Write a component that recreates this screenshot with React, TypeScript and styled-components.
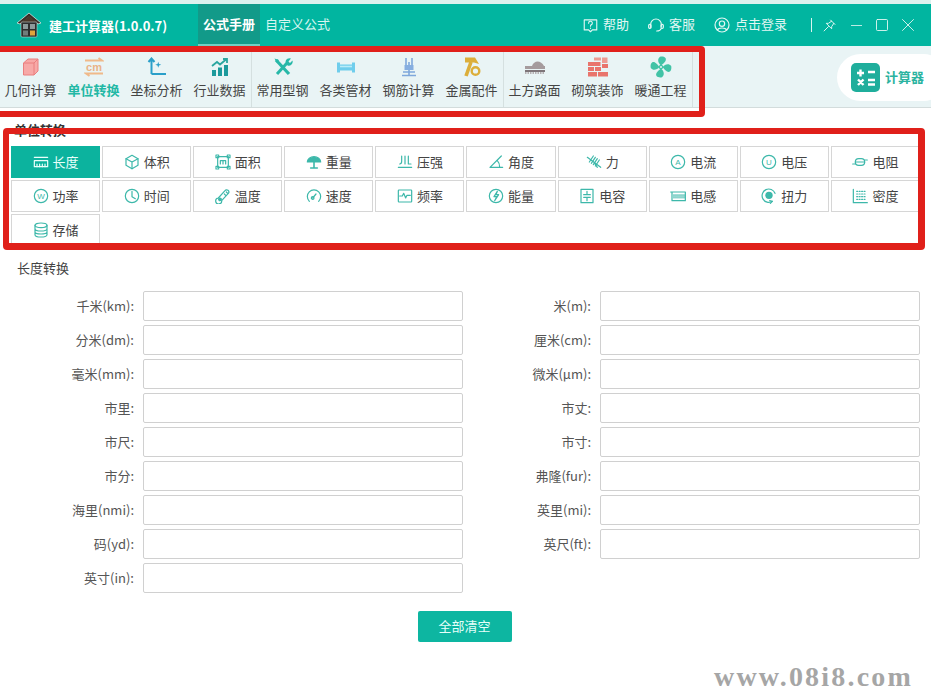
import React from "react";
import styled, { createGlobalStyle } from "styled-components";

const GlobalStyle = createGlobalStyle`
  html, body {
    margin: 0;
    padding: 0;
    background: #fff;
    overflow: hidden;
  }
  body {
    font-family: "Noto Sans CJK SC", "Noto Sans", sans-serif;
    font-size: 13px;
    color: #444;
  }
  * { box-sizing: border-box; }
`;

const Page = styled.div`
  width: 931px;
  height: 696px;
  position: relative;
  overflow: hidden;
  background: #fff;
`;

const Header = styled.header`
  height: 46px;
  border-top: 4px solid #dcf1ee;
  background: #01b5a0;
  display: flex;
  align-items: stretch;
  color: #fff;
`;
const Brand = styled.div`
  width: 198px;
  padding-left: 16px;
  display: flex;
  align-items: center;
  gap: 7px;
  font-weight: 700;
  font-size: 13px;
  white-space: nowrap;
`;
const NavTab = styled.div<{ $active?: boolean }>`
  width: ${p => (p.$active ? "62px" : "70px")};
  padding-left: ${p => (p.$active ? "0" : "5px")};
  padding-bottom: 1px;
  display: flex;
  align-items: center;
  justify-content: ${p => (p.$active ? "center" : "flex-start")};
  white-space: nowrap;
  font-weight: ${p => (p.$active ? 700 : 400)};
  background: ${p => (p.$active ? "#129a89" : "transparent")};
  border-bottom: 2px solid ${p => (p.$active ? "#6fd0c3" : "transparent")};
  color: ${p => (p.$active ? "#fff" : "#d8f5f0")};
`;
const HeaderRight = styled.div`
  margin-left: auto;
  padding-right: 17px;
  display: flex;
  align-items: center;
  color: #e2f7f3;
`;
const HeaderLink = styled.div<{ $gap: number }>`
  display: flex;
  align-items: center;
  gap: 5px;
  margin-right: ${p => p.$gap}px;
  white-space: nowrap;
`;
const LinkText = styled.span`
  margin-bottom: 4px;
`;
const HeaderDivider = styled.div`
  width: 1px;
  height: 14px;
  background: #d8f5f0;
  margin-right: 11px;
`;
const WindowButton = styled.div<{ $gap: number }>`
  display: flex;
  margin-right: ${p => p.$gap}px;
`;

const Toolbar = styled.nav`
  height: 62px;
  position: relative;
  background: #e9f4f5;
  border-bottom: 1px solid #d3dcdc;
  display: flex;
`;
const ToolGroup = styled.div`
  height: 61px;
  display: flex;
  margin-left: -1px;
  border-right: 1px solid #d5e0e0;
`;
const ToolItem = styled.div<{ $active?: boolean }>`
  width: 63px;
  display: flex;
  flex-direction: column;
  align-items: center;
  padding-top: 11px;
  gap: 3px;
  white-space: nowrap;
  font-size: 13px;
  line-height: 20px;
  font-weight: ${p => (p.$active ? 700 : 400)};
  color: ${p => (p.$active ? "#22b8a5" : "#444")};
`;
const ToolIconSlot = styled.span`
  height: 20px;
  display: flex;
  align-items: center;
`;
const CalcPill = styled.div`
  position: absolute;
  left: 837px;
  top: 8px;
  width: 110px;
  height: 47px;
  background: #fff;
  border-radius: 24px;
  display: flex;
  align-items: center;
  padding-left: 14px;
  gap: 5px;
  font-weight: 700;
  color: #2bb3a0;
  white-space: nowrap;
`;
const CalcLabel = styled.span`
  margin-bottom: 2px;
`;

const Mark = styled.div`
  position: absolute;
  border: 6px solid #e0201a;
  border-radius: 4px;
  pointer-events: none;
`;
const ToolbarMark = styled(Mark)`
  left: -10px;
  top: 0;
  width: 715px;
  height: 71px;
`;
const TabsMark = styled(Mark)`
  left: 3px;
  top: 20px;
  width: 922px;
  height: 122px;
  border-width: 6px 7px 7px 6px;
`;

const TabSection = styled.section`
  position: relative;
  padding: 13px 0 0 11px;
  height: 144px;
`;
const SectionTitle = styled.div`
  font-weight: 700;
  line-height: 18px;
  padding-left: 3px;
  color: #333;
`;
const TabGrid = styled.div`
  margin-top: 7px;
  width: 909px;
  display: grid;
  grid-template-columns: repeat(10, 1fr);
  grid-auto-rows: 32px;
  gap: 2px;
`;
const UnitTab = styled.div<{ $active?: boolean }>`
  display: flex;
  align-items: center;
  justify-content: center;
  gap: 4px;
  padding-bottom: 1px;
  white-space: nowrap;
  border: 1px solid ${p => (p.$active ? "#0cb39e" : "#d6d6d6")};
  background: ${p => (p.$active ? "#0cb39e" : "#fff")};
  color: ${p => (p.$active ? "#eafffb" : "#444")};
`;
const TabIconWrap = styled.span<{ $active?: boolean }>`
  display: flex;
  color: ${p => (p.$active ? "#eafffb" : "#3db8aa")};
`;

const FormTitle = styled.div`
  margin: 0 0 14px 17px;
  padding-top: 7px;
  line-height: 18px;
  color: #444;
`;
const FormGrid = styled.div`
  display: grid;
  grid-template-columns: 455px 455px;
  column-gap: 2px;
  row-gap: 4px;
  padding-left: 8px;
`;
const Field = styled.label`
  display: flex;
  align-items: center;
`;
const FieldLabel = styled.span`
  width: 126px;
  margin-right: 9px;
  margin-bottom: 2px;
  text-align: right;
  color: #555;
  white-space: nowrap;
`;
const FieldInput = styled.input`
  width: 320px;
  height: 30px;
  border: 1px solid #d0d0d0;
  border-radius: 2px;
  background: #fff;
  outline: none;
`;
const ClearRow = styled.div`
  display: flex;
  justify-content: center;
  margin-top: 18px;
  padding-right: 2px;
`;
const ClearButton = styled.button`
  width: 94px;
  height: 31px;
  padding: 0 0 2px;
  border: none;
  border-radius: 2px;
  background: #0db6a1;
  color: #e6fffa;
  font: inherit;
`;
const Watermark = styled.div`
  position: absolute;
  left: 714px;
  top: 661px;
  font-family: "Liberation Serif", serif;
  font-weight: 700;
  font-size: 28px;
  line-height: 32px;
  letter-spacing: 2.2px;
  color: #a6a6a6;
  white-space: nowrap;
`;

const Svg = styled.svg<{ $size: number }>`
  width: ${p => p.$size}px;
  height: ${p => p.$size}px;
  flex: none;
  display: block;
`;

const Line = ({ size, children }: { size: number; children: React.ReactNode }) => (
  <Svg $size={size} viewBox="0 0 24 24" fill="none" stroke="currentColor" strokeWidth={1.8} strokeLinecap="round" strokeLinejoin="round">
    {children}
  </Svg>
);

const Logo = () => (
  <Svg $size={26} viewBox="0 0 26 26">
    <path d="M13 1 L25 11 L22 12 L13 5 L4 12 L1 11 Z" fill="#3a2f28" stroke="#e8f3ee" strokeWidth="0.7" />
    <path d="M13 4 L22 11 H4 Z" fill="#4a372a" />
    <rect x="5" y="10" width="16" height="15" rx="1" fill="#2d2d2d" stroke="#dfeee9" strokeWidth="0.5" />
    <rect x="7" y="12" width="5" height="5" fill="#8d9a9a" />
    <rect x="14" y="12" width="5" height="5" fill="#8d9a9a" />
    <rect x="7" y="18.5" width="5" height="5" fill="#6f7c7c" />
    <rect x="14" y="18.5" width="5" height="5" fill="#e0a43c" />
  </Svg>
);

const fanBlade = "M11 9.5 C8 7 7 3 10 0.8 C14 0 17 2 15.5 5 C14.5 7 12.5 8 11 9.5 Z";

const toolIcons: Record<string, React.ReactNode> = {
  cube: (
    <Svg $size={20} viewBox="0 0 20 20">
      <path d="M2.5 6 L7 2 H17 V14 L13 18 H2.5 Z" fill="#f7a9a7" stroke="#ea7f7f" strokeWidth="1" />
      <path d="M2.5 6 H13 V18 M13 6 L17 2" fill="none" stroke="#ea7f7f" strokeWidth="1" />
    </Svg>
  ),
  cm: (
    <Svg $size={20} viewBox="0 0 20 20">
      <path d="M1 3.5 H18 L14.5 1 M19 16.5 H2 L5.5 19" fill="none" stroke="#f0b98a" strokeWidth="1.8" />
      <text x="10" y="13.5" textAnchor="middle" fontSize="11" fontWeight="700" fontFamily="Liberation Sans" fill="#e9b387">cm</text>
    </Svg>
  ),
  axes: (
    <Svg $size={20} viewBox="0 0 20 20">
      <path d="M4.5 17 V2 M1.5 5 L4.5 1.5 L7.5 5 M4.5 17 H19" fill="none" stroke="#2a9fc9" strokeWidth="2" />
      <path d="M13 5 L14 8 L17 9 L14 10 L13 13 L12 10 L9 9 L12 8 Z" fill="#2a9fc9" transform="translate(1.5 1) scale(.75)" />
    </Svg>
  ),
  chart: (
    <Svg $size={20} viewBox="0 0 20 20">
      <path d="M2 9 L7 5 L10 7.5 L16 2.5 M13 2 H17 V6" fill="none" stroke="#2aa6a0" strokeWidth="1.8" />
      <path d="M2 13 H6 V19 H2 Z M8 10.5 H12 V19 H8 Z M14 8 H18 V19 H14 Z" fill="#1d9a9c" />
    </Svg>
  ),
  tools: (
    <Svg $size={20} viewBox="0 0 20 20">
      <path d="M3 3 L16 17" stroke="#27b8a8" strokeWidth="3.2" fill="none" />
      <path d="M1.5 1.5 L6 3 L4 6 Z" fill="#27b8a8" />
      <path d="M4 17 L14 6" stroke="#27b8a8" strokeWidth="3" fill="none" />
      <path d="M12.5 5 A4 4 0 0 1 18 1.5 L15.5 4.5 L17 6 L19.5 3.5 A4 4 0 0 1 14.5 8.5 Z" fill="#27b8a8" />
    </Svg>
  ),
  pipe: (
    <Svg $size={20} viewBox="0 0 20 20">
      <path d="M1 5.5 H4 V7.5 H16 V5.5 H19 V15.5 H16 V13.5 H4 V15.5 H1 Z" fill="#6fcdec" />
      <path d="M4 9.5 H16" stroke="#b9ecf8" strokeWidth="1.6" />
    </Svg>
  ),
  rebar: (
    <Svg $size={20} viewBox="0 0 20 20">
      <path d="M7 1 V8 M13 1 V8 M10 5 V19" stroke="#7fa8dc" strokeWidth="1.6" fill="none" />
      <path d="M5.5 8 H14.5 V13 H5.5 Z" fill="#86aee0" />
      <path d="M3 18.5 H17 M4 15 H16" stroke="#7fa8dc" strokeWidth="1.6" fill="none" />
    </Svg>
  ),
  hammer: (
    <Svg $size={20} viewBox="0 0 20 20">
      <path d="M9 5 L4 19" stroke="#dcae3a" strokeWidth="3.6" fill="none" />
      <path d="M3 0.5 H13 L17 7 L12 5.5 H3 Z" fill="#dcae3a" />
      <circle cx="13.5" cy="14" r="3.8" fill="none" stroke="#dcae3a" strokeWidth="2.4" />
    </Svg>
  ),
  road: (
    <Svg $size={22} viewBox="0 0 22 20">
      <path d="M8 9 C10 3 17 3 20 9 H21 V12 H1 V9 Z" fill="#a59b9d" />
      <path d="M1 13 H21 V15 H1 Z" fill="#7e7579" />
      <path d="M1 16 H21" stroke="#a59b9d" strokeWidth="1.4" strokeDasharray="1.5 1" />
    </Svg>
  ),
  brick: (
    <Svg $size={22} viewBox="0 0 22 22">
      <path d="M7 1.5 H14 V4.5 H7 Z M15 1.5 H20.5 V7 H15 Z" fill="#ee9a92" />
      <path d="M1 6 H13.5 V10 H1 Z M15 8 H21 V12 H15 Z M1 11 H7 V15 H1 Z M8 11 H14 V15 H8 Z M1 16 H10 V20.5 H1 Z M11 16 H21 V20.5 H11 Z" fill="#e9746c" />
    </Svg>
  ),
  fan: (
    <Svg $size={22} viewBox="0 0 22 22">
      {[0, 90, 180, 270].map(a => (
        <path key={a} d={fanBlade} fill="#42c3a6" transform={`rotate(${a} 11 11)`} />
      ))}
      <circle cx="11" cy="11" r="2.2" fill="#42c3a6" />
      <circle cx="11" cy="11" r="1" fill="#e9f4f5" />
    </Svg>
  ),
};

const letter = (c: string) => (
  <>
    <circle cx="12" cy="12" r="10" />
    <text x="12" y="16.5" textAnchor="middle" fontSize="12" fontFamily="Liberation Sans" fill="currentColor" stroke="none">{c}</text>
  </>
);

const tabIcons: Record<string, React.ReactNode> = {
  长度: <><path d="M2 5 H22" /><rect x="2" y="10" width="20" height="9" /><path d="M6 15 V19 M10 15 V19 M14 15 V19 M18 15 V19" /></>,
  体积: <><path d="M12 2 L21 7 V17 L12 22 L3 17 V7 Z" /><path d="M3 7 L12 12 L21 7 M12 12 V22" /></>,
  面积: <><rect x="4" y="4" width="16" height="16" /><rect x="1.5" y="1.5" width="4" height="4" /><rect x="18.5" y="1.5" width="4" height="4" /><rect x="1.5" y="18.5" width="4" height="4" /><rect x="18.5" y="18.5" width="4" height="4" /><path d="M8 15 V10 H16 V15 M12 10 V15" /></>,
  重量: <><path d="M2 12 A10 8 0 0 1 22 12 Z" fill="currentColor" /><path d="M12 12 V20 M7 21 H17" strokeWidth="2.4" /></>,
  压强: <><path d="M7 3 V11 C7 14 6 15 4 15 M12 3 V15 M17 3 V15 H21" /><path d="M2 20 H22" /></>,
  角度: <><path d="M20 3 L3 20 H22" /><path d="M14 10 C17 13 17.5 16 17.5 20" /></>,
  力: <><path d="M2 5 L22 20 M13 14 L17 20" /><path d="M5 12 L11 3 M8 14 L14 5 M11 16 L17 7 M14 18 L20 9" /></>,
  电流: letter("A"),
  电压: letter("U"),
  电阻: <><rect x="5" y="7" width="14" height="10" rx="5" /><path d="M1 15 H5 M19 9 H23 M5 12 H19" /></>,
  功率: letter("W"),
  时间: <><circle cx="12" cy="12" r="10" /><path d="M12 5 V13 L17 16" /></>,
  温度: <><path d="M5 15 L15 4 A3 3 0 0 1 20 8 L10 19 A4.5 4.5 0 1 1 5 15 Z" /><circle cx="7.5" cy="17" r="2" fill="currentColor" /><path d="M14 9 L16 11 M17 6 L19 8" /></>,
  速度: <><path d="M5 20 A10 10 0 1 1 19 20" /><path d="M10 15 L15 9" /><circle cx="10" cy="15" r="2" /></>,
  频率: <><rect x="2" y="3" width="20" height="18" rx="1" /><path d="M4 12 H8 L10 8 L13 15 L15 11 H20" /></>,
  能量: <><circle cx="12" cy="12" r="10" /><path d="M14 5 L9 13 H13 L10 19 L16 10 H12 Z" /></>,
  电容: <><rect x="3" y="2" width="18" height="20" /><path d="M12 5 V10 M7 10 H17 M7 14 H17 M12 14 V19" /></>,
  电感: <><path d="M1 6 H23 V19 H3 V6" /><path d="M6 10 V15 M9 10 V15 M12 10 V15 M15 10 V15 M18 10 V15 M21 10 V15" strokeDasharray="2 1" /></>,
  扭力: <><path d="M17 20 A10 10 0 1 1 21 8" /><circle cx="12" cy="11" r="5.5" fill="currentColor" stroke="none" /><path d="M13 19 L17 20 L14 23" /></>,
  密度: <><path d="M2 2 V22 H23" /><path d="M7 5 H20 M7 9 H20 M7 13 H20 M7 17 H20" strokeDasharray="1.5 2.2" /></>,
  存储: <><ellipse cx="12" cy="5" rx="9" ry="3.5" /><path d="M3 5 V19 C3 21 7 22.5 12 22.5 C17 22.5 21 21 21 19 V5 M3 10 C3 12 7 13.5 12 13.5 C17 13.5 21 12 21 10 M3 15 C3 17 7 18 12 18 C17 18 21 17 21 15" /></>,
};

const toolGroups = [
  [
    { icon: "cube", name: "几何计算" },
    { icon: "cm", name: "单位转换", active: true },
    { icon: "axes", name: "坐标分析" },
    { icon: "chart", name: "行业数据" },
  ],
  [
    { icon: "tools", name: "常用型钢" },
    { icon: "pipe", name: "各类管材" },
    { icon: "rebar", name: "钢筋计算" },
    { icon: "hammer", name: "金属配件" },
  ],
  [
    { icon: "road", name: "土方路面" },
    { icon: "brick", name: "砌筑装饰" },
    { icon: "fan", name: "暖通工程" },
  ],
];

const tabs = [
  "长度", "体积", "面积", "重量", "压强", "角度", "力", "电流", "电压", "电阻",
  "功率", "时间", "温度", "速度", "频率", "能量", "电容", "电感", "扭力", "密度",
  "存储",
];

const fields = [
  "千米(km):", "米(m):",
  "分米(dm):", "厘米(cm):",
  "毫米(mm):", "微米(μm):",
  "市里:", "市丈:",
  "市尺:", "市寸:",
  "市分:", "弗隆(fur):",
  "海里(nmi):", "英里(mi):",
  "码(yd):", "英尺(ft):",
  "英寸(in):",
];

const App = () => {
  return (
    <Page>
      <GlobalStyle />
      <Header>
        <Brand>
          <Logo />
          建工计算器(1.0.0.7)
        </Brand>
        <NavTab $active>公式手册</NavTab>
        <NavTab>自定义公式</NavTab>
        <HeaderRight>
          <HeaderLink $gap={19}>
            <Line size={15}>
              <path d="M2 3 H22 V19 H15 L12 22 L9 19 H2 Z" />
              <path d="M9 8.5 A3 3 0 1 1 13 11 C12 11.5 12 12 12 13 M12 16 V16.5" />
            </Line>
            <LinkText>帮助</LinkText>
          </HeaderLink>
          <HeaderLink $gap={19}>
            <Line size={16}>
              <path d="M4 16 V11 A8 8 0 0 1 20 11 V14" />
              <rect x="1" y="11" width="3.5" height="6" rx="1.7" />
              <rect x="19.5" y="11" width="3.5" height="6" rx="1.7" />
              <path d="M20 17 C19 20 16 21 13 21" />
            </Line>
            <LinkText>客服</LinkText>
          </HeaderLink>
          <HeaderLink $gap={24}>
            <Line size={16}>
              <circle cx="12" cy="12" r="10.5" />
              <circle cx="12" cy="10" r="4" />
              <path d="M5 19.5 C7 15.5 17 15.5 19 19.5" />
            </Line>
            <LinkText>点击登录</LinkText>
          </HeaderLink>
          <HeaderDivider />
          <WindowButton $gap={15}>
            <Line size={13}>
              <path d="M14 2 L22 10 M16 4 L10 8 L6 8 L16 18 L16 14 L20 8 M10 14 L2 22" />
            </Line>
          </WindowButton>
          <WindowButton $gap={14}>
            <Line size={11}><path d="M0 12 H24" /></Line>
          </WindowButton>
          <WindowButton $gap={14}>
            <Line size={12}><rect x="1" y="1" width="22" height="22" rx="2" /></Line>
          </WindowButton>
          <WindowButton $gap={0}>
            <Line size={12}><path d="M1 1 L23 23 M23 1 L1 23" /></Line>
          </WindowButton>
        </HeaderRight>
      </Header>

      <Toolbar>
        {toolGroups.map((group, i) => (
          <ToolGroup key={i}>
            {group.map(item => (
              <ToolItem key={item.name} $active={item.active}>
                <ToolIconSlot>{toolIcons[item.icon]}</ToolIconSlot>
                {item.name}
              </ToolItem>
            ))}
          </ToolGroup>
        ))}
        <CalcPill>
          <Svg $size={29} viewBox="0 0 29 29">
            <rect width="29" height="29" rx="5" fill="#1fae9c" />
            <path d="M6 10 H13 M9.5 6.5 V13.5 M17 9 H24 M17 17 H24 M17 21.5 H24 M7 16.5 L12.5 22 M12.5 16.5 L7 22" stroke="#fff" strokeWidth="2.4" />
          </Svg>
          <CalcLabel>计算器</CalcLabel>
        </CalcPill>
        <ToolbarMark />
      </Toolbar>

      <TabSection>
        <SectionTitle>单位转换</SectionTitle>
        <TabGrid>
          {tabs.map((name, i) => (
            <UnitTab key={name} $active={i === 0}>
              <TabIconWrap $active={i === 0}>
                <Line size={16}>{tabIcons[name]}</Line>
              </TabIconWrap>
              {name}
            </UnitTab>
          ))}
        </TabGrid>
        <TabsMark />
      </TabSection>

      <FormTitle>长度转换</FormTitle>
      <FormGrid>
        {fields.map(label => (
          <Field key={label}>
            <FieldLabel>{label}</FieldLabel>
            <FieldInput />
          </Field>
        ))}
      </FormGrid>
      <ClearRow>
        <ClearButton>全部清空</ClearButton>
      </ClearRow>
      <Watermark>www.08i8.com</Watermark>
    </Page>
  );
};

export default App;
